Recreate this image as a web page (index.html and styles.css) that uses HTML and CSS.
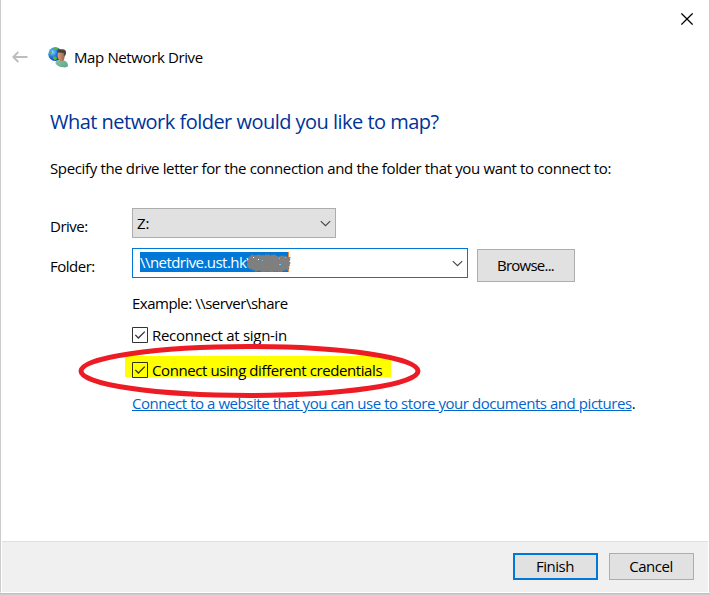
FILE: index.html
```html
<!DOCTYPE html>
<html lang="en">
<head>
<meta charset="utf-8">
<title>Map Network Drive</title>
<link rel="stylesheet" href="styles.css">
</head>
<body>
<div class="window">
  <div class="titlebar">
    <svg class="close" width="12" height="12" viewBox="0 0 12 12"><path d="M.4.4 11.6 11.6M11.6.4.4 11.6" stroke="#000" stroke-width="1.25"/></svg>
  </div>
  <header class="nav">
    <svg class="back" width="16" height="12" viewBox="0 0 16 12"><path d="M15.5 6H1.5M6.3 1 1.3 6l5 5" fill="none" stroke="#bdbdbd" stroke-width="1.8"/></svg>
    <svg class="drive-icon" width="21" height="21" viewBox="0 0 21 21">
      <defs>
        <radialGradient id="globe" cx=".3" cy=".35" r=".75"><stop offset="0" stop-color="#83dcff"/><stop offset=".45" stop-color="#2377e0"/><stop offset="1" stop-color="#0b2f9a"/></radialGradient>
        <linearGradient id="face" x2="1"><stop offset="0" stop-color="#dca17b"/><stop offset="1" stop-color="#9b6547"/></linearGradient>
        <linearGradient id="coat" x2="1" y2="1"><stop offset="0" stop-color="#84c6a5"/><stop offset="1" stop-color="#5fa588"/></linearGradient>
      </defs>
      <circle cx="7.200" cy="7.200" r="6.900" fill="url(#globe)"/>
      <path d="M5 1.500C7 .3 9 .4 11 1.500L9 2.700 7 3ZM1.500 4.500 3.500 4l.5 2-2.500 2ZM5.500 9l3 1 .5 2-2 1.400L5 11.500Z" fill="#55b63c"/>
      <path d="M7.500 16.500c0-3 2-3.500 4-3.500h3.500c2.500 1 5 2 5 5.500 0 2-3 2-5 1.800-3-.3-6-1.300-7.500-3.800Z" fill="url(#coat)"/>
      <path d="M10 5h6.500v5c0 3-1.500 4.500-3 4.500S9.700 12 9.700 9Z" fill="url(#face)"/>
      <path d="M9 5.500c.5-3 3-3.500 5.700-3.200 3 .3 4 2.700 3 5.200L16.500 10l-.8-4-5.200-.5Z" fill="#4c4039"/>
    </svg>
    <span class="name">Map Network Drive</span>
  </header>
  <main class="content">
    <h1>What network folder would you like to map?</h1>
    <p class="intro">Specify the drive letter for the connection and the folder that you want to connect to:</p>
    <div class="row drive-row">
      <span class="label">Drive:</span>
      <div class="select"><span>Z:</span><svg width="11" height="7" viewBox="0 0 11 7"><path d="M.8 1.100 5.500 5.700 10.200 1.100" fill="none" stroke="#444" stroke-width="1.1"/></svg></div>
    </div>
    <div class="row folder-row">
      <span class="label">Folder:</span>
      <div class="combo">
        <span class="selected">\\netdrive.ust.hk\<svg class="scribble" width="44" height="19" viewBox="0 0 44 19"><path d="M2 5l3-3 3 1 4-1 3 1 5-1 4 1 3-1 4 2 4-1 4 1 4 1-1 3 1 3-2 3 1 2-5 1-4 2-4-1-5 1-4-1-4 1-3-2-4 1-4-2-3-1-2-3 1-3Z" fill="#7f7f7f" stroke="#7f7f7f" stroke-width="1.500" stroke-dasharray="2 1"/><path d="M15 7.500h1M32 5.500h1M32 11.500h2M38 4.500h1" stroke="#62cfff"/><path d="M11 6.500h1M6 4.500h1" stroke="#fff"/></svg></span>
        <svg width="11" height="7" viewBox="0 0 11 7"><path d="M.8 1.100 5.500 5.700 10.200 1.100" fill="none" stroke="#444" stroke-width="1.1"/></svg>
      </div>
      <div class="button browse">Browse...</div>
    </div>
    <div class="options">
      <p class="example">Example: \\server\share</p>
      <div class="check reconnect"><svg class="box" width="16" height="16" viewBox="0 0 16 16"><path d="M.5.5h15v15H.5Z" fill="#fff" stroke="#333"/><path d="M3.300 7.900 6.400 11 12.800 4.600" fill="none" stroke="#333" stroke-width="1.300"/></svg><span class="t-reconnect">Reconnect at sign-in</span></div>
      <div class="check credentials"><svg class="box" width="16" height="16" viewBox="0 0 16 16"><path d="M.5.5h15v15H.5Z" fill="#ff0" stroke="#33330a"/><path d="M3.300 7.900 6.400 11 12.800 4.600" fill="none" stroke="#33330a" stroke-width="1.300"/></svg><span class="t-credentials">Connect using different credentials</span>
        <svg class="ring" width="346" height="56" viewBox="0 0 346 56"><ellipse cx="172.500" cy="28" rx="168.500" ry="24.500" fill="none" stroke="#ed1c24" stroke-width="5"/></svg>
      </div>
      <p class="link-line"><a>Connect to a website that you can use to store your documents and pictures</a>.</p>
    </div>
  </main>
  <footer class="footer">
    <div class="button finish">Finish</div>
    <div class="button cancel">Cancel</div>
  </footer>
</div>
</body>
</html>
```
FILE: styles.css
```css
* { box-sizing: border-box; }
body { margin: 0; height: 596px; overflow: hidden; background: linear-gradient(#fff 593px, #bdbdbd 593px, #dadada 596px); font: 15px/20px "Open Sans", "Noto Sans", sans-serif; color: #000; }
h1, p { margin: 0; }
svg { display: block; flex: none; }
span, p, h1, .button { white-space: nowrap; }
.window { width: 710px; height: 593px; display: flex; flex-direction: column; background: #fff; border-left: 1px solid #ccc; border-right: 1px solid #ccc; border-bottom: 1px solid #fff; }
.titlebar { height: 38px; padding: 13px 16px 0 0; display: flex; justify-content: flex-end; }
.nav { height: 38px; padding-left: 11px; display: flex; align-items: center; }
.drive-icon { margin-left: 20px; }
.name { margin-left: 5px; letter-spacing: -.38px; }
.content { flex: 1; padding: 32px 0 0 49px; }
h1 { font-size: 20px; line-height: 28px; font-weight: 400; color: #003399; letter-spacing: -.52px; }
.intro { margin-top: 22px; letter-spacing: -.355px; }
.row { display: flex; }
.label { width: 82px; letter-spacing: -.5px; }
.drive-row { margin-top: 30px; height: 40px; }
.drive-row .label { padding-top: 8px; }
.folder-row .label { padding-top: 8px; }
.select { width: 204px; height: 30px; border: 1px solid #adadad; background: #e1e1e1; display: flex; align-items: center; justify-content: space-between; padding: 0 4px 0 4px; }
.folder-row { height: 45px; }
.combo { width: 336px; height: 30px; border: 1px solid #0078d7; background: #fff; display: flex; align-items: center; justify-content: space-between; padding: 0 4px 0 7px; }
.selected { position: relative; width: 149px; height: 20px; line-height: 20px; margin-top: -2px; background: #0078d7; color: #fff; border-right: 1px solid #ff8728; letter-spacing: -.55px; }
.scribble { position: absolute; left: 107px; top: 1px; }
.button { display: flex; align-items: center; justify-content: center; background: #e1e1e1; border: 1px solid #adadad; letter-spacing: -.5px; padding: 0 1px 2px 0; }
.browse { width: 98px; height: 33px; margin: 1px 0 0 9px; letter-spacing: -.75px; }
.options { padding-left: 82px; }
.example { letter-spacing: -.5px; }
.check { display: flex; align-items: center; gap: 4px; height: 21px; }
.t-reconnect { letter-spacing: -.29px; }
.t-credentials { letter-spacing: -.41px; }
.reconnect { margin-top: 11px; }
.credentials { position: relative; width: 266px; margin: 11px 0 0 -7px; padding: 7px 0 0 7px; background: #ff0; }
.ring { position: absolute; left: -48px; top: -13px; }
.link-line { margin-top: 16px; letter-spacing: -.445px; }
.link-line a { color: #0066cc; text-decoration: underline; }
.footer { height: 51px; background: #f0f0f0; border-top: 1px solid #dfdfdf; margin: 0 1px; display: flex; justify-content: flex-end; padding: 11px 14px 0 0; gap: 11px; }
.footer .button { width: 85px; height: 27px; }
.footer .finish { border: 2px solid #0078d7; }
```
